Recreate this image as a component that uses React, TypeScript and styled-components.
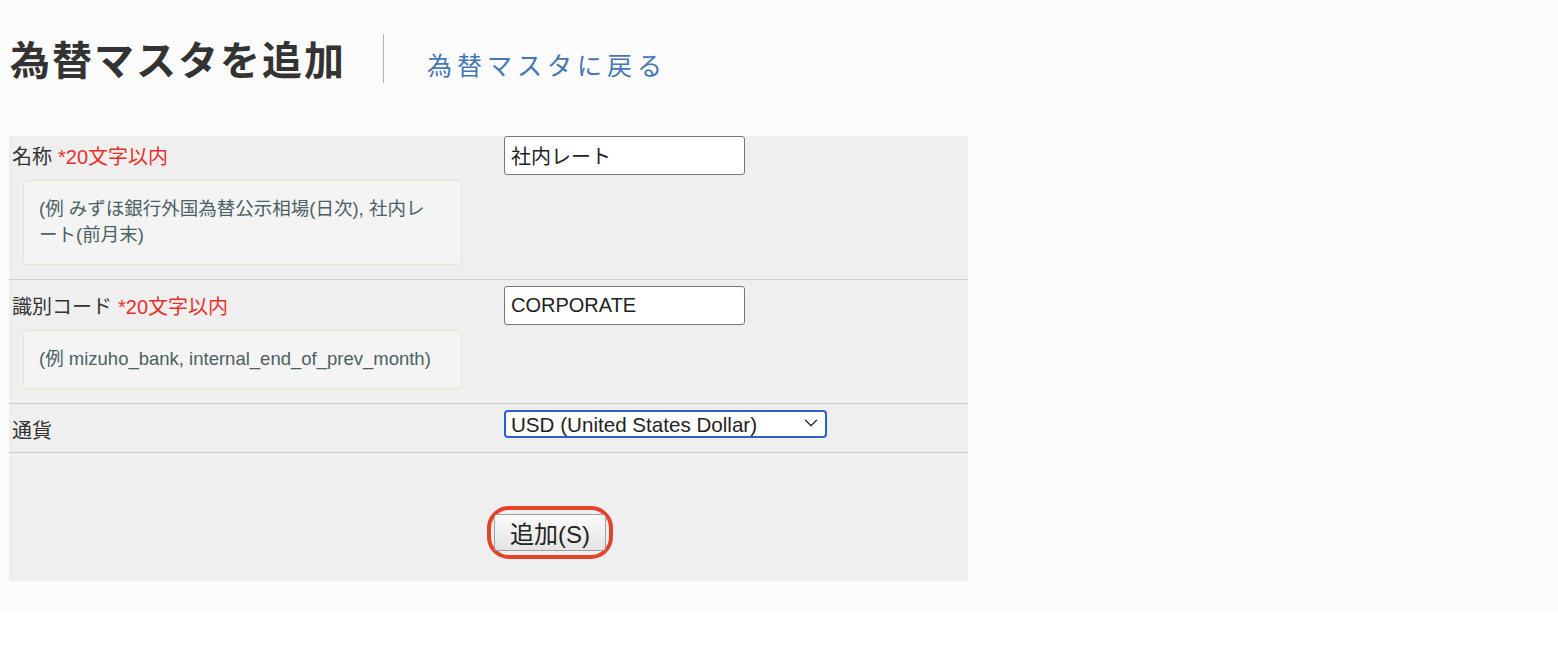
import React from "react";
import styled, { createGlobalStyle } from "styled-components";
import { ChevronDown } from "lucide-react";

const GlobalStyle = createGlobalStyle`
  html, body {
    margin: 0;
    padding: 0;
    background: #ffffff;
    font-family: "Liberation Sans", "Noto Sans CJK JP", sans-serif;
    color: #333333;
  }
`;

const Page = styled.div`
  background: #fcfcfc;
  padding: 34px 0 31px 9px;
`;

const Header = styled.div`
  display: flex;
  align-items: center;
  height: 49px;
`;

const Title = styled.h1`
  margin: 0;
  font-family: "Noto Sans CJK JP", sans-serif;
  font-size: 40px;
  font-weight: 700;
  letter-spacing: 2px;
  line-height: 49px;
  color: #333333;
  padding-left: 1px;
`;

const Divider = styled.div`
  width: 1px;
  height: 49px;
  background: #b4b4b4;
  margin: 0 43px 0 37px;
`;

const BackLink = styled.a`
  font-family: "Noto Sans CJK JP", sans-serif;
  font-size: 25px;
  letter-spacing: 5px;
  color: #4477b4;
  text-decoration: none;
  margin-top: 10px;
  cursor: pointer;
`;

const Form = styled.div`
  width: 959px;
  margin-top: 53px;
  background: #efefef;
`;

const Row = styled.div<{ $first?: boolean }>`
  display: grid;
  grid-template-columns: 495px 1fr;
  padding-top: ${({ $first }) => ($first ? "0" : "6px")};
  border-bottom: 1px solid #cccccc;
`;

const LabelCell = styled.div`
  padding: 9px 3px 9px;
`;

const Label = styled.div`
  font-size: 20px;
  line-height: 24px;
  color: #333333;
`;

const Required = styled.span`
  color: #e8302a;
  margin-left: 6px;
`;

const Hint = styled.div`
  margin: 11px 0 5px 11px;
  width: 407px;
  padding: 15px 15px 16px;
  background: #f4f4f4;
  border: 1px solid #ebe2c8;
  border-radius: 4px;
  font-size: 18.5px;
  line-height: 26px;
  color: #4b6064;
  white-space: nowrap;
`;

const ValueCell = styled.div`
  padding: 0;
`;

const TextInput = styled.input`
  box-sizing: border-box;
  width: 241px;
  height: 39px;
  padding: 0 6px;
  border: 1px solid #767676;
  border-radius: 3px;
  background: #ffffff;
  font-family: "Liberation Sans", "Noto Sans CJK JP", sans-serif;
  font-size: 20px;
  color: #222222;
  outline: none;
`;

const SelectWrap = styled.div`
  position: relative;
  width: 323px;
  height: 28px;
`;

const Select = styled.select`
  box-sizing: border-box;
  appearance: none;
  width: 100%;
  height: 100%;
  padding: 0 30px 0 5px;
  border: 2px solid #2d5fcf;
  border-radius: 4px;
  background: #ffffff;
  font-family: "Liberation Sans", sans-serif;
  font-size: 20.6px;
  color: #222222;
  outline: none;
`;

const Chevron = styled.span`
  position: absolute;
  right: 5px;
  top: 2px;
  display: flex;
  color: #222222;
  pointer-events: none;
`;

const ButtonRow = styled.div`
  padding: 53px 0 22px 478px;
`;

const Ring = styled.span`
  display: inline-flex;
  padding: 4px 3px;
  border: 4px solid #e5422b;
  border-radius: 22px;
`;

const SubmitButton = styled.button`
  width: 112px;
  height: 37px;
  border: 1px solid #a0a0a0;
  border-radius: 3px;
  background: linear-gradient(#fbfbfb, #e4e4e4);
  font-family: "Liberation Sans", "Noto Sans CJK JP", sans-serif;
  font-size: 24px;
  color: #222222;
  padding: 0;
  cursor: pointer;
`;

export default function App() {
  return (
    <>
      <GlobalStyle />
      <Page>
        <Header>
          <Title>為替マスタを追加</Title>
          <Divider />
          <BackLink>為替マスタに戻る</BackLink>
        </Header>

        <Form>
          <Row $first>
            <LabelCell>
              <Label>
                名称<Required>*20文字以内</Required>
              </Label>
              <Hint>
                (例 みずほ銀行外国為替公示相場(日次), 社内レ
                <br />
                ート(前月末)
              </Hint>
            </LabelCell>
            <ValueCell>
              <TextInput defaultValue="社内レート" />
            </ValueCell>
          </Row>

          <Row>
            <LabelCell>
              <Label>
                識別コード<Required>*20文字以内</Required>
              </Label>
              <Hint>(例 mizuho_bank, internal_end_of_prev_month)</Hint>
            </LabelCell>
            <ValueCell>
              <TextInput defaultValue="CORPORATE" />
            </ValueCell>
          </Row>

          <Row>
            <LabelCell>
              <Label>通貨</Label>
            </LabelCell>
            <ValueCell>
              <SelectWrap>
                <Select defaultValue="USD">
                  <option value="USD">USD (United States Dollar)</option>
                  <option value="EUR">EUR (Euro)</option>
                  <option value="JPY">JPY (Japanese Yen)</option>
                </Select>
                <Chevron>
                  <ChevronDown size={22} strokeWidth={1.3} />
                </Chevron>
              </SelectWrap>
            </ValueCell>
          </Row>

          <ButtonRow>
            <Ring>
              <SubmitButton>追加(S)</SubmitButton>
            </Ring>
          </ButtonRow>
        </Form>
      </Page>
    </>
  );
}
